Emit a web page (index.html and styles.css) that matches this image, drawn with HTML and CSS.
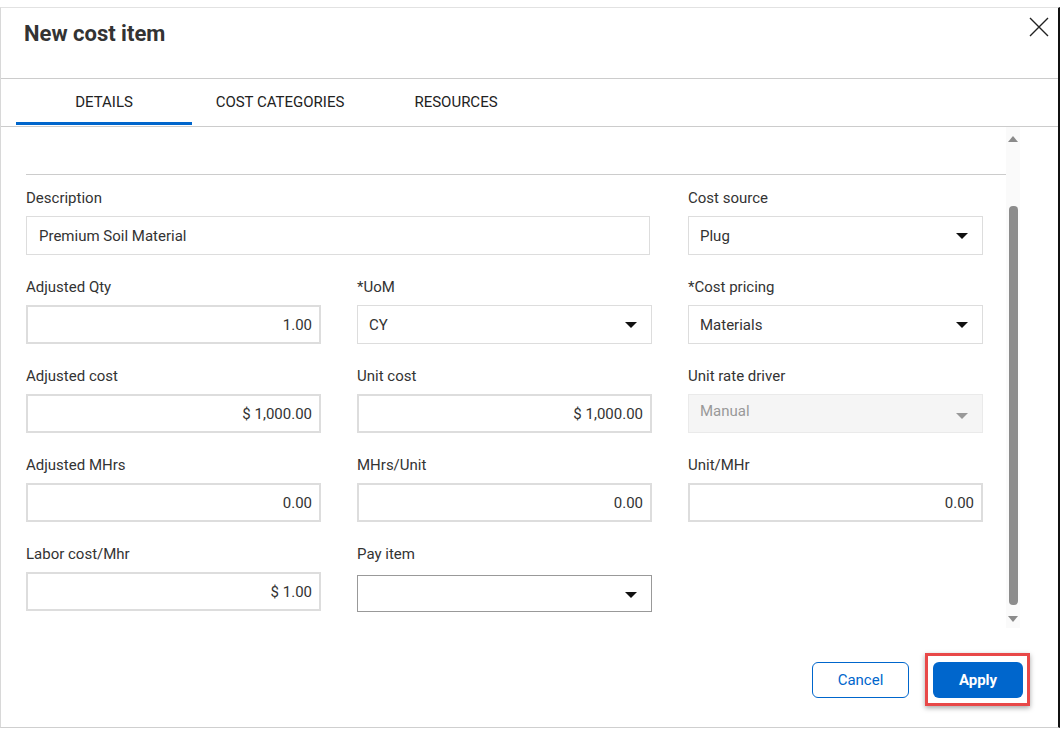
FILE: index.html
```html
<!DOCTYPE html>
<html lang="en">
<head>
    <meta charset="UTF-8">
    <title>New cost item</title>
    <link rel="stylesheet" href="styles.css">
</head>
<body>
    <div class="dialog">
        <div class="dialog-header">
            <h1>New cost item</h1>
            <button class="close-btn" title="Close">
                <svg width="20" height="20" viewBox="0 0 20 20"><path d="M1 1 L19 19 M19 1 L1 19" stroke="#222" stroke-width="1.4" fill="none"/></svg>
            </button>
        </div>

        <div class="tabs">
            <div class="tab active">DETAILS</div>
            <div class="tab">COST CATEGORIES</div>
            <div class="tab">RESOURCES</div>
        </div>

        <div class="dialog-body">
            <div class="form-area">
                <div class="scrolled-off"></div>
                <div class="form-grid">
                    <div class="field span-2">
                        <label>Description</label>
                        <div class="input text-input wide">Premium Soil Material</div>
                    </div>
                    <div class="field">
                        <label>Cost source</label>
                        <div class="input select">Plug</div>
                    </div>

                    <div class="field">
                        <label>Adjusted Qty</label>
                        <div class="input num-input">1.00</div>
                    </div>
                    <div class="field">
                        <label>*UoM</label>
                        <div class="input select">CY</div>
                    </div>
                    <div class="field">
                        <label>*Cost pricing</label>
                        <div class="input select">Materials</div>
                    </div>

                    <div class="field">
                        <label>Adjusted cost</label>
                        <div class="input num-input">$ 1,000.00</div>
                    </div>
                    <div class="field">
                        <label>Unit cost</label>
                        <div class="input num-input">$ 1,000.00</div>
                    </div>
                    <div class="field">
                        <label>Unit rate driver</label>
                        <div class="input select disabled">Manual</div>
                    </div>

                    <div class="field">
                        <label>Adjusted MHrs</label>
                        <div class="input num-input">0.00</div>
                    </div>
                    <div class="field">
                        <label>MHrs/Unit</label>
                        <div class="input num-input">0.00</div>
                    </div>
                    <div class="field">
                        <label>Unit/MHr</label>
                        <div class="input num-input">0.00</div>
                    </div>

                    <div class="field">
                        <label>Labor cost/Mhr</label>
                        <div class="input num-input">$ 1.00</div>
                    </div>
                    <div class="field">
                        <label>Pay item</label>
                        <div class="input select focused"></div>
                    </div>
                </div>
            </div>
            <div class="scrollbar">
                <div class="arrow-up"></div>
                <div class="track">
                    <div class="thumb"></div>
                </div>
                <div class="arrow-down"></div>
            </div>
        </div>

        <div class="dialog-footer">
            <button class="btn btn-cancel">Cancel</button>
            <div class="highlight">
                <button class="btn btn-apply">Apply</button>
            </div>
        </div>
    </div>
</body>
</html>
```

FILE: styles.css
```css
body {
    margin: 0;
    background: white;
    font-family: Roboto, "Liberation Sans", Arial, sans-serif;
    color: #333;
}

.dialog {
    box-sizing: border-box;
    width: 1060px;
    height: 721px;
    margin-top: 7px;
    border-top: 1px solid #e2e2e2;
    border-left: 1px solid #d8d8d8;
    border-right: 2px solid #111;
    border-bottom: 1px solid #cfcfcf;
    display: flex;
    flex-direction: column;
}

.dialog-header {
    height: 70px;
    border-bottom: 1px solid #cccccc;
    display: flex;
    justify-content: space-between;
    align-items: flex-start;
    padding: 0 9px 0 23px;
}

.dialog-header h1 {
    margin: 13px 0 0 0;
    font-size: 22px;
    line-height: 26px;
    font-weight: bold;
    color: #333;
}

.close-btn {
    background: none;
    border: none;
    padding: 0;
    margin-top: 9px;
    width: 20px;
    height: 20px;
    cursor: pointer;
}

.tabs {
    display: flex;
    padding-left: 15px;
    border-bottom: 1px solid #cccccc;
}

.tab {
    width: 176px;
    height: 43px;
    line-height: 46px;
    text-align: center;
    font-size: 15px;
    color: #222;
    border-bottom: 3px solid transparent;
    margin-bottom: 1px;
}

.tab.active {
    border-bottom-color: #0066cc;
}

.dialog-body {
    display: flex;
    height: 501px;
}

.form-area {
    width: 980px;
    padding-left: 25px;
    overflow: hidden;
}

.scrolled-off {
    height: 47px;
    border-bottom: 1px solid #cccccc;
}

.form-grid {
    display: grid;
    grid-template-columns: 295px 295px 295px;
    column-gap: 36px;
    row-gap: 22px;
    padding-top: 13px;
}

.field {
    display: flex;
    flex-direction: column;
}

.field.span-2 {
    grid-column: span 2;
}

.field label {
    font-size: 15px;
    line-height: 20px;
    color: #333;
    margin-bottom: 8px;
}

.input {
    box-sizing: border-box;
    height: 39px;
    font-size: 15px;
    color: #333;
    display: flex;
    align-items: center;
    position: relative;
}

.text-input {
    border: 1px solid #dddddd;
    padding-left: 12px;
}

.text-input.wide {
    margin-right: 2px;
}

.num-input {
    border: 2px solid #dddddd;
    justify-content: flex-end;
    padding-right: 7px;
}

.select {
    border: 1px solid #dddddd;
    padding-left: 11px;
}

.select::after {
    content: "";
    position: absolute;
    right: 14px;
    top: 16px;
    border-left: 6px solid transparent;
    border-right: 6px solid transparent;
    border-top: 6px solid #111;
}

.select.disabled {
    background: #f5f5f5;
    border-color: #eaeaea;
    color: #999;
    align-items: flex-start;
    padding-top: 7px;
}

.select.disabled::after {
    border-top-color: #999;
    top: 18px;
}

.select.focused {
    border-color: #999;
    height: 37px;
    margin-top: 3px;
}

.scrollbar {
    width: 14px;
    background: #fafafa;
    display: flex;
    flex-direction: column;
    align-items: center;
    padding-bottom: 6px;
}

.arrow-up {
    margin-top: 9px;
    border-left: 5px solid transparent;
    border-right: 5px solid transparent;
    border-bottom: 6px solid #8a8a8a;
}

.track {
    flex: 1;
    padding-top: 64px;
    padding-bottom: 6px;
    display: flex;
}

.thumb {
    width: 9px;
    height: 399px;
    background: #8c8c8c;
    border-radius: 4px;
}

.arrow-down {
    border-left: 5px solid transparent;
    border-right: 5px solid transparent;
    border-top: 6px solid #8a8a8a;
}

.dialog-footer {
    flex: 1;
    display: flex;
    justify-content: flex-end;
    align-items: flex-start;
    padding: 25px 28px 0 0;
    gap: 16px;
}

.btn {
    height: 36px;
    border-radius: 6px;
    font-family: Roboto, "Liberation Sans", Arial, sans-serif;
    font-size: 15px;
    cursor: pointer;
}

.btn-cancel {
    margin-top: 9px;
    width: 97px;
    background: white;
    color: #0066cc;
    border: 1px solid #0066cc;
}

.highlight {
    border: 3px solid #e84848;
    padding: 6px 4px 5px 5px;
    box-shadow: 0 2px 5px rgba(0,0,0,0.35);
    display: flex;
}

.btn-apply {
    width: 90px;
    background: #0066cc;
    color: white;
    border: none;
    font-weight: bold;
}
```
